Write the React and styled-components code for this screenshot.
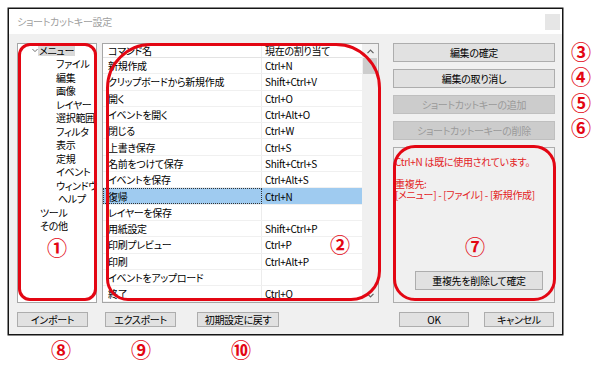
import React from 'react';
import styled, { createGlobalStyle } from 'styled-components';

const GlobalStyle = createGlobalStyle`
html, body {
margin: 0;
padding: 0;
background: #fff;
}
body {
font-family: "Noto Sans CJK JP", "Noto Sans", sans-serif;
font-size: 10px;
font-feature-settings: "palt";
letter-spacing: -0.3px;
color: #000;
}
`;

const Page = styled.div`
position: relative;
width: 602px;
height: 375px;
padding: 8px;
box-sizing: border-box;
overflow: hidden;
`;

const Dialog = styled.div`
width: 555px;
height: 327px;
box-sizing: border-box;
border: 1px solid #151515;
box-shadow: 0 0 0 0.5px #151515;
background: #f0f0f0;
display: flex;
flex-direction: column;
`;

const TitleBar = styled.div`
height: 25px;
background: #fff;
display: flex;
align-items: center;
justify-content: space-between;
padding: 0 2px 0 8px;
`;

const Title = styled.span`
color: #a0a0a0;
font-size: 10px;
`;

const CloseBox = styled.div`
width: 15px;
height: 16px;
margin-top: 1px;
background: #e6e6e6;
`;

const Body = styled.div`
flex: 1;
display: flex;
flex-direction: column;
padding: 9px 7px 0 8px;
`;

const Main = styled.div`
display: flex;
height: 260px;
`;

const Tree = styled.div`
width: 80px;
box-sizing: border-box;
border: 1px solid #a6a6a6;
background: #fff;
`;

const TreeItem = styled.div`
display: flex;
align-items: center;
height: 13.5px;
line-height: 13.5px;
padding-left: ${p => p.$indent}px;
white-space: nowrap;
`;

const Chevron = styled.span`
display: inline-flex;
width: 6px;
`;

const TreeLabel = styled.span`
padding: 0 1px;
line-height: 10px;
background: ${p => (p.$active ? '#d9d9d9' : 'transparent')};
`;

const Table = styled.div`
width: 277px;
margin-left: 5px;
box-sizing: border-box;
border: 1px solid #a6a6a6;
background: #fff;
display: flex;
`;

const Rows = styled.div`
width: 259px;
display: flex;
flex-direction: column;
overflow: hidden;
`;

const Row = styled.div`
display: flex;
height: ${p => (p.$head ? 14 : 16.3)}px;
flex-shrink: 0;
box-sizing: border-box;
border-bottom: 1px solid ${p => (p.$head ? '#e3e3e3' : '#f0f0f0')};
`;

const Cell = styled.div`
width: ${p => p.$w}px;
box-sizing: border-box;
display: flex;
align-items: center;
padding-left: ${p => p.$pad}px;
white-space: nowrap;
overflow: hidden;
border-right: ${p => (p.$divider ? '1px solid #ececec' : 'none')};
background: ${p => (p.$selected ? '#9fcbf0' : 'transparent')};
outline: ${p => (p.$focus ? '1px dotted #333' : 'none')};
outline-offset: -1px;
`;

const ScrollBar = styled.div`
width: 16px;
background: #f0f0f0;
display: flex;
flex-direction: column;
`;

const ScrollArrow = styled.div`
height: 14px;
display: flex;
align-items: center;
justify-content: center;
`;

const Thumb = styled.div`
height: 16px;
margin: 0 1px;
background: #cdcdcd;
`;

const Track = styled.div`
flex: 1;
`;

const Side = styled.div`
width: 162px;
margin-left: 14px;
display: flex;
flex-direction: column;
gap: 7px;
`;

const Button = styled.button`
box-sizing: border-box;
height: ${p => p.$h || 19}px;
width: ${p => (p.$w ? `${p.$w}px` : 'auto')};
padding: 0;
border: 1px solid ${p => (p.disabled ? '#bfbfbf' : '#adadad')};
background: ${p => (p.disabled ? '#cccccc' : '#e1e1e1')};
color: ${p => (p.disabled ? '#9a9a9a' : '#000')};
font-family: "Noto Sans CJK JP", sans-serif;
font-size: 10px;
font-feature-settings: "palt";
letter-spacing: -0.3px;
line-height: 1;
display: flex;
align-items: center;
justify-content: center;
flex-shrink: 0;
`;

const InfoPanel = styled.div`
flex: 1;
box-sizing: border-box;
border: 1px solid #adadad;
display: flex;
flex-direction: column;
padding: 8px 0 12px 1px;
`;

const Message = styled.div`
color: #e3231f;
line-height: 11px;
height: 11px;
white-space: nowrap;
`;

const PanelButton = styled(Button)`
margin-top: auto;
margin-left: 20px;
`;

const Footer = styled.div`
display: flex;
align-items: center;
margin-top: 9px;
`;

const Gap = styled.div`
width: ${p => p.$w}px;
`;

const Spacer = styled.div`
flex: 1;
`;

const Ring = styled.div`
position: absolute;
left: ${p => p.$x}px;
top: ${p => p.$y}px;
width: ${p => p.$w}px;
height: ${p => p.$h}px;
box-sizing: border-box;
border: 3px solid #e30613;
border-radius: ${p => p.$r};
pointer-events: none;
`;

const Mark = styled.div`
position: absolute;
left: ${p => p.$x}px;
top: ${p => p.$y}px;
transform: translate(-50%, -50%);
color: #e30613;
font-family: "Noto Sans CJK JP", sans-serif;
font-weight: 700;
font-size: 20px;
line-height: 18px;
height: 18px;
letter-spacing: 0;
`;

const ChevronDown = () => (
    <svg width="7" height="5" viewBox="0 0 7 5">
        <path d="M0.5 0.8 L3.5 3.8 L6.5 0.8" fill="none" stroke="#555" strokeWidth="1" />
    </svg>
);

const ArrowIcon = ({ up }) => (
    <svg width="7" height="5" viewBox="0 0 7 5">
        <path
            d={up ? 'M0.5 4.2 L3.5 1.2 L6.5 4.2' : 'M0.5 0.8 L3.5 3.8 L6.5 0.8'}
            fill="none"
            stroke="#606060"
            strokeWidth="1.2"
        />
    </svg>
);

const treeItems = [
    { label: 'ファイル', indent: 37 },
    { label: '編集', indent: 37 },
    { label: '画像', indent: 37 },
    { label: 'レイヤー', indent: 37 },
    { label: '選択範囲', indent: 37 },
    { label: 'フィルタ', indent: 37 },
    { label: '表示', indent: 37 },
    { label: '定規', indent: 37 },
    { label: 'イベント', indent: 37 },
    { label: 'ウィンドウ', indent: 37 },
    { label: 'ヘルプ', indent: 39 },
    { label: 'ツール', indent: 21 },
    { label: 'その他', indent: 21 },
];

const commands = [
    ['新規作成', 'Ctrl+N'],
    ['クリップボードから新規作成', 'Shift+Ctrl+V'],
    ['開く', 'Ctrl+O'],
    ['イベントを開く', 'Ctrl+Alt+O'],
    ['閉じる', 'Ctrl+W'],
    ['上書き保存', 'Ctrl+S'],
    ['名前をつけて保存', 'Shift+Ctrl+S'],
    ['イベントを保存', 'Ctrl+Alt+S'],
    ['復帰', 'Ctrl+N'],
    ['レイヤーを保存', ''],
    ['用紙設定', 'Shift+Ctrl+P'],
    ['印刷プレビュー', 'Ctrl+P'],
    ['印刷', 'Ctrl+Alt+P'],
    ['イベントをアップロード', ''],
    ['終了', 'Ctrl+Q'],
];

const SELECTED = 8;

const App = () => {
    return (
        <>
            <GlobalStyle />
            <Page>
                <Dialog>
                    <TitleBar>
                        <Title>ショートカットキー設定</Title>
                        <CloseBox />
                    </TitleBar>
                    <Body>
                        <Main>
                            <Tree>
                                <TreeItem $indent={14}>
                                    <Chevron><ChevronDown /></Chevron>
                                    <TreeLabel $active>メニュー</TreeLabel>
                                </TreeItem>
                                {treeItems.map(item => (
                                    <TreeItem key={item.label} $indent={item.indent}>
                                        <TreeLabel>{item.label}</TreeLabel>
                                    </TreeItem>
                                ))}
                            </Tree>
                            <Table>
                                <Rows>
                                    <Row $head>
                                        <Cell $w={159} $pad={5} $divider>コマンド名</Cell>
                                        <Cell $w={100} $pad={3}>現在の割り当て</Cell>
                                    </Row>
                                    {commands.map(([name, key], i) => (
                                        <Row key={name}>
                                            <Cell
                                                $w={159}
                                                $pad={5}
                                                $divider={i !== SELECTED}
                                                $selected={i === SELECTED}
                                                $focus={i === SELECTED}
                                            >
                                                {name}
                                            </Cell>
                                            <Cell $w={100} $pad={3} $selected={i === SELECTED}>
                                                {key}
                                            </Cell>
                                        </Row>
                                    ))}
                                </Rows>
                                <ScrollBar>
                                    <ScrollArrow><ArrowIcon up /></ScrollArrow>
                                    <Thumb />
                                    <Track />
                                    <ScrollArrow><ArrowIcon /></ScrollArrow>
                                </ScrollBar>
                            </Table>
                            <Side>
                                <Button>編集の確定</Button>
                                <Button>編集の取り消し</Button>
                                <Button disabled>ショートカットキーの追加</Button>
                                <Button disabled>ショートカットーキーの削除</Button>
                                <InfoPanel>
                                    <Message>Ctrl+N は既に使用されています。</Message>
                                    <Message />
                                    <Message>重複先:</Message>
                                    <Message>[メニュー] - [ファイル] - [新規作成]</Message>
                                    <PanelButton $w={128}>重複先を削除して確定</PanelButton>
                                </InfoPanel>
                            </Side>
                        </Main>
                        <Footer>
                            <Button $w={71} $h={15}>インポート</Button>
                            <Gap $w={17} />
                            <Button $w={71} $h={15}>エクスポート</Button>
                            <Gap $w={21} />
                            <Button $w={82} $h={15}>初期設定に戻す</Button>
                            <Spacer />
                            <Button $w={70} $h={15}>OK</Button>
                            <Gap $w={15} />
                            <Button $w={70} $h={15}>キャンセル</Button>
                            <Gap $w={1} />
                        </Footer>
                    </Body>
                </Dialog>

                <Ring $x={18} $y={43} $w={79} $h={258} $r="12px" />
                <Ring $x={106} $y={43} $w={275} $h={258} $r="45px 45px 30px 22px" />
                <Ring $x={393} $y={145} $w={163} $h={156} $r="22px" />

                <Mark $x={57} $y={248}>①</Mark>
                <Mark $x={340} $y={245}>②</Mark>
                <Mark $x={581} $y={52}>③</Mark>
                <Mark $x={581} $y={77}>④</Mark>
                <Mark $x={581} $y={103}>⑤</Mark>
                <Mark $x={581} $y={128}>⑥</Mark>
                <Mark $x={475} $y={247}>⑦</Mark>
                <Mark $x={61} $y={350}>⑧</Mark>
                <Mark $x={141} $y={350}>⑨</Mark>
                <Mark $x={241} $y={350}>⑩</Mark>
            </Page>
        </>
    );
};

export default App;
